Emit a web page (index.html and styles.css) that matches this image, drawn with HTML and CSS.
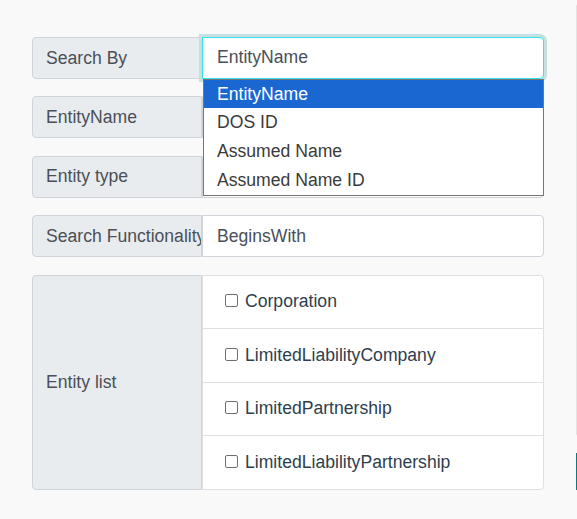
FILE: index.html
```html
<!DOCTYPE html>
<html lang="en">
<head>
<meta charset="utf-8">
<title>Entity Search</title>
<link rel="stylesheet" href="styles.css">
</head>
<body>
<div class="page">
  <main class="form">
    <div class="group group-select">
      <span class="label">Search By</span>
      <div class="control focused">EntityName</div>
      <ul class="dropdown">
        <li class="option selected">EntityName</li>
        <li class="option">DOS ID</li>
        <li class="option">Assumed Name</li>
        <li class="option">Assumed Name ID</li>
      </ul>
    </div>
    <div class="group">
      <span class="label">EntityName</span>
      <div class="control"></div>
    </div>
    <div class="group">
      <span class="label">Entity type</span>
      <div class="control"></div>
    </div>
    <div class="group">
      <span class="label">Search Functionality</span>
      <div class="control">BeginsWith</div>
    </div>
    <div class="group group-list">
      <span class="label">Entity list</span>
      <ul class="list">
        <li class="item"><span class="check"></span>Corporation</li>
        <li class="item"><span class="check"></span>LimitedLiabilityCompany</li>
        <li class="item"><span class="check"></span>LimitedPartnership</li>
        <li class="item"><span class="check"></span>LimitedLiabilityPartnership</li>
      </ul>
    </div>
  </main>
  <aside class="side">
    <div class="side-card"></div>
    <div class="side-button"></div>
  </aside>
</div>
</body>
</html>
```
FILE: styles.css
```css
html, body {
  margin: 0;
  padding: 0;
  background: #f9f9f9;
  overflow: hidden;
}
body {
  font-family: "Liberation Sans", Arial, sans-serif;
  font-size: 17.6px;
  color: #495057;
}
.page {
  display: flex;
  width: 100%;
}
.form {
  width: 512px;
  flex-shrink: 0;
  margin: 37px 32px 0 32px;
}
.group {
  display: flex;
  height: 41.8px;
  margin-bottom: 17.6px;
  position: relative;
}
.label {
  box-sizing: border-box;
  width: 170px;
  flex-shrink: 0;
  display: flex;
  align-items: center;
  padding: 0 13px;
  background: #e9ecef;
  border: 1px solid #ced4da;
  border-radius: 4px 0 0 4px;
  white-space: nowrap;
  overflow: hidden;
  line-height: 26.4px;
}
.control {
  box-sizing: border-box;
  flex: 1;
  display: flex;
  align-items: center;
  padding: 0 14px;
  background: #fff;
  border: 1px solid #ced4da;
  border-radius: 0 4px 4px 0;
}
.control.focused {
  border-color: #33e4ef;
  box-shadow: 0 0 0 3px #c6dfe0;
  position: relative;
  z-index: 1;
}
.dropdown {
  position: absolute;
  top: 42px;
  left: 171px;
  width: 341px;
  box-sizing: border-box;
  margin: 0;
  padding: 0;
  list-style: none;
  background: #fff;
  border: 1px solid #767676;
  z-index: 2;
}
.option {
  height: 29px;
  line-height: 29px;
  padding-left: 13px;
  color: #3b3b3b;
}
.option.selected {
  background: #1a67d2;
  color: #fff;
  height: 28px;
  line-height: 28px;
}
.group-list {
  height: 215px;
}
.list {
  flex: 1;
  margin: 0;
  padding: 0;
  list-style: none;
  background: #fff;
  border: 1px solid #dfdfdf;
  border-radius: 0 4px 4px 0;
  display: flex;
  flex-direction: column;
}
.item {
  flex: 1;
  display: flex;
  align-items: center;
  padding: 0 22px 0 21px;
  color: #2f3e4e;
  border-bottom: 1px solid #dfdfdf;
}
.item:last-child {
  border-bottom: none;
}
.check {
  box-sizing: border-box;
  width: 13px;
  height: 13px;
  border: 1px solid #6f6f6f;
  border-radius: 2px;
  margin: -2px 7px 0 1px;
  background: #fff;
}
.side {
  flex: 1;
  min-width: 0;
  display: flex;
  flex-direction: column;
}
.side-card {
  margin-top: 5px;
  height: 430px;
  border-left: 1px solid #e4e4e4;
}
.side-button {
  margin-top: 18px;
  height: 37px;
  background: #0a7b80;
}
```
